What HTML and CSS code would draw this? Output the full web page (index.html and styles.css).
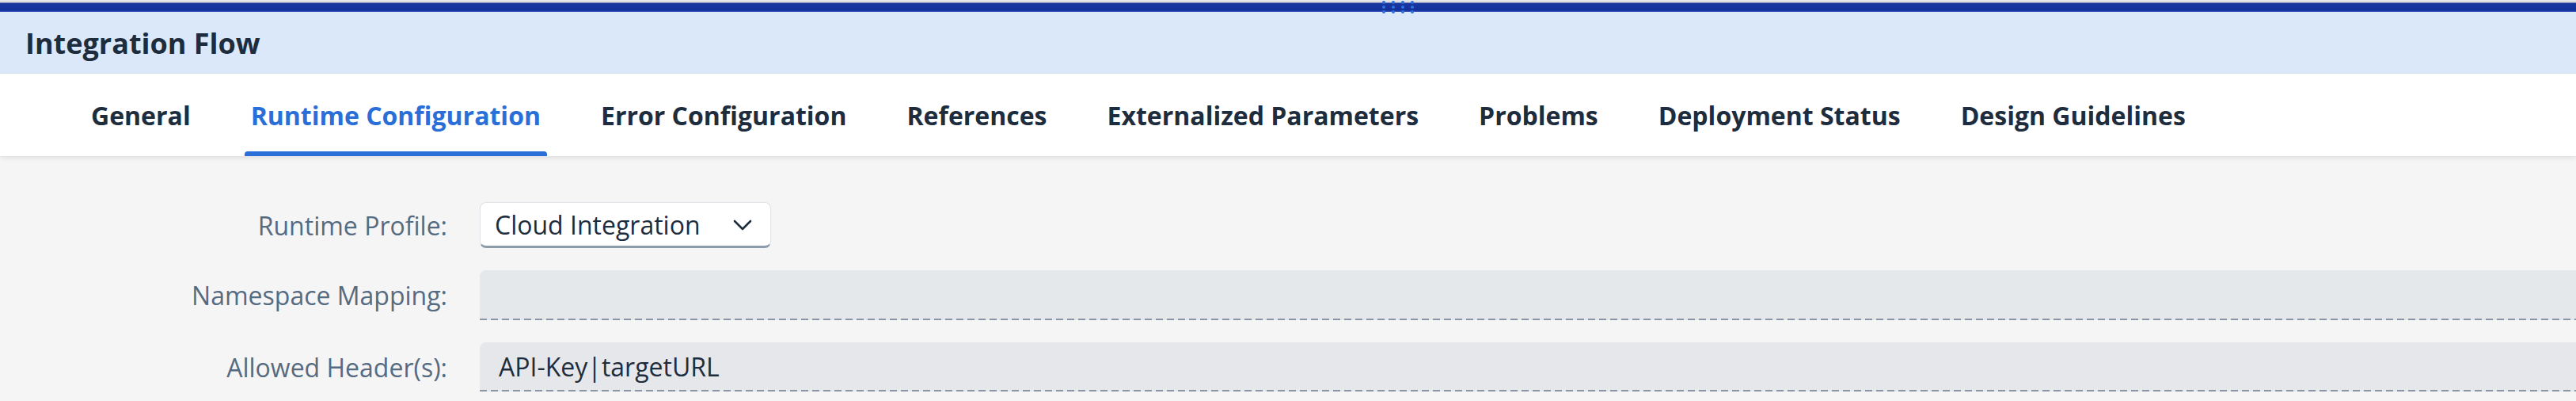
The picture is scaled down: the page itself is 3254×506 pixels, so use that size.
FILE: index.html
```html
<!DOCTYPE html>
<html lang="en">
<head>
<meta charset="utf-8">
<title>Integration Flow</title>
<link rel="stylesheet" href="styles.css">
</head>
<body>
<div class="app">
  <div class="shell-bar">
    <svg class="splitter-grip" width="42" height="18" viewBox="0 0 42 18" aria-hidden="true">
      <g fill="#2f6fdc">
        <circle cx="3" cy="3" r="2"/><circle cx="3" cy="9" r="2"/><circle cx="3" cy="15" r="2"/>
        <circle cx="15" cy="3" r="2"/><circle cx="15" cy="9" r="2"/><circle cx="15" cy="15" r="2"/>
        <circle cx="27" cy="3" r="2"/><circle cx="27" cy="9" r="2"/><circle cx="27" cy="15" r="2"/>
        <circle cx="39" cy="3" r="2"/><circle cx="39" cy="9" r="2"/><circle cx="39" cy="15" r="2"/>
      </g>
    </svg>
  </div>

  <header class="page-header">
    <h1 class="page-title">Integration Flow</h1>
  </header>

  <nav class="tab-bar">
    <a class="tab">General</a>
    <a class="tab tab-active">Runtime Configuration</a>
    <a class="tab">Error Configuration</a>
    <a class="tab">References</a>
    <a class="tab">Externalized Parameters</a>
    <a class="tab">Problems</a>
    <a class="tab">Deployment Status</a>
    <a class="tab">Design Guidelines</a>
  </nav>

  <main class="form">
    <label class="form-label">Runtime Profile:</label>
    <div class="select">
      <span class="select-value">Cloud Integration</span>
      <svg class="select-arrow" width="24" height="14" viewBox="0 0 24 14" aria-hidden="true">
        <path d="M2 2 L12 12 L22 2" fill="none" stroke="#1d2d3e" stroke-width="2.6" stroke-linecap="round" stroke-linejoin="round"/>
      </svg>
    </div>

    <label class="form-label">Namespace Mapping:</label>
    <div class="field field-ns"></div>

    <label class="form-label">Allowed Header(s):</label>
    <div class="field field-headers"><span class="field-value">API-Key|targetURL</span></div>
  </main>
</div>
</body>
</html>
```

FILE: styles.css
```css
* {
  box-sizing: border-box;
}

html, body {
  margin: 0;
  padding: 0;
}

body {
  width: 3254px;
  height: 506px;
  overflow: hidden;
  background: #f5f5f5;
  font-family: "Open Sans", "Noto Sans", sans-serif;
  color: #1d2d3e;
}

.app {
  display: flex;
  flex-direction: column;
  height: 506px;
}

/* thin shell strip above the editor */
.shell-bar {
  position: relative;
  height: 15px;
  background: linear-gradient(#ececec 0, #d2d4d9 3px, #1a37a0 4px, #12309a 13px, #3d5fbf 15px);
}

.splitter-grip {
  position: absolute;
  left: 1745px;
  top: 0;
}

.page-header {
  height: 78px;
  background: #dae8fa;
  display: flex;
  align-items: center;
  padding-left: 32px;
}

.page-title {
  margin: 0;
  font-size: 36px;
  font-weight: 700;
  color: #1d2d3e;
}

.tab-bar {
  position: relative;
  z-index: 1;
  height: 104px;
  background: #ffffff;
  display: flex;
  align-items: stretch;
  padding-left: 107px;
  gap: 60px;
  box-shadow: 0 2px 6px rgba(0, 0, 0, 0.10);
}

.tab {
  position: relative;
  display: flex;
  align-items: center;
  padding: 0 8px;
  font-size: 32px;
  font-weight: 700;
  color: #1d2d3e;
  white-space: nowrap;
  cursor: pointer;
}

.tab-active {
  color: #2a6fd8;
}

.tab-active::after {
  content: "";
  position: absolute;
  left: 0;
  right: 0;
  bottom: 0;
  height: 6px;
  border-radius: 4px 4px 0 0;
  background: #2a6fd8;
}

.form {
  flex: 1;
  display: grid;
  grid-template-columns: 565px 1fr;
  grid-auto-rows: auto;
  column-gap: 41px;
  row-gap: 28px;
  align-items: center;
  align-content: start;
  padding-top: 58px;
}

.form-label {
  justify-self: end;
  font-size: 32px;
  color: #556b82;
  white-space: nowrap;
}

.select {
  justify-self: start;
  width: 368px;
  height: 58px;
  display: flex;
  align-items: center;
  justify-content: space-between;
  padding: 0 23px 0 18px;
  background: #ffffff;
  border: 1px solid #dfe3e8;
  border-bottom: 3px solid #8d9cab;
  border-radius: 8px;
}

.select-value {
  font-size: 32px;
  color: #1d2d3e;
}

.select-arrow {
  display: block;
  margin-top: 2px;
}

/* read-only input: tinted box with a dashed underline */
.field {
  height: 63px;
  display: flex;
  align-items: center;
  padding: 0 0 2px 24px;
  border-radius: 8px 0 0 0;
  background:
    repeating-linear-gradient(to right, #8a96a4 0 9px, transparent 9px 14px) left bottom / 100% 2px no-repeat,
    #e5e8ea;
}

.field-headers {
  height: 62px;
  background:
    repeating-linear-gradient(to right, #8a96a4 0 9px, transparent 9px 14px) left bottom / 100% 2px no-repeat,
    #e6e7ea;
}

.field-value {
  font-size: 32px;
  color: #1d2d3e;
}
```
